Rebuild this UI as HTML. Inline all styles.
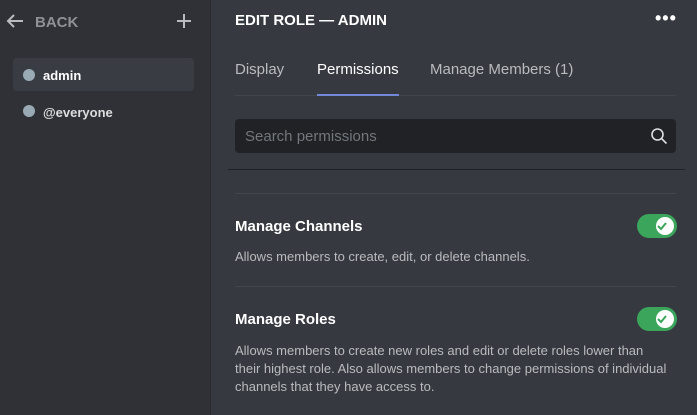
<!DOCTYPE html><html><head><style>
body{margin:0;width:697px;height:415px;overflow:hidden;background:#36393f;font-family:"Liberation Sans",sans-serif;position:relative}
.sb{position:absolute;left:0;top:0;width:210px;height:415px;background:#2f3136;border-right:1px solid #2a2c30}
.a{position:absolute}
.t{color:#fff;font-weight:bold}
.dot{position:absolute;width:12px;height:12px;border-radius:50%;background:#99aab5}
.hr{position:absolute;height:1px;background:#42454a}
.tog{position:absolute;left:637px;width:40px;height:24px;border-radius:12px;background:#3ba55c}
.tog i{position:absolute;right:3px;top:3px;width:18px;height:18px;border-radius:50%;background:#fff}
.desc{color:#b9bbbe;font-size:13px;line-height:18px}
</style></head><body>
<div class="sb">
<svg class="a" style="left:6px;top:13px" width="18" height="16" viewBox="0 0 18 16"><path d="M17 8H2M8 2L2 8l6 6" stroke="#b9bbbe" stroke-width="2" fill="none"/></svg>
<div class="a" style="left:35px;top:14px;color:#8e9297;font-weight:bold;font-size:15px">BACK</div>
<svg class="a" style="left:176px;top:13px" width="16" height="16"><path d="M8 1v14M1 8h14" stroke="#b9bbbe" stroke-width="2"/></svg>
<div class="a" style="left:13px;top:58px;width:181px;height:33px;background:#393c43;border-radius:4px"></div>
<div class="dot" style="left:23px;top:69px"></div>
<div class="a t" style="left:43px;top:68px;font-size:13px">admin</div>
<div class="dot" style="left:23px;top:105px"></div>
<div class="a t" style="left:43px;top:105px;font-size:13px;color:#dcddde">@everyone</div>
</div>
<div class="a t" style="left:235px;top:12px;font-size:15px">EDIT ROLE — ADMIN</div>
<div class="a" style="left:655px;top:8px;color:#fff;font-size:18px;letter-spacing:1px;font-weight:bold">•••</div>
<div class="a" style="left:235px;top:61px;color:#b9bbbe;font-size:15px">Display</div>
<div class="a" style="left:317px;top:61px;color:#fff;font-size:15px">Permissions</div>
<div class="a" style="left:430px;top:61px;color:#b9bbbe;font-size:15px">Manage Members (1)</div>
<div class="hr" style="left:235px;top:95px;width:441px;background:#42454a"></div>
<div class="a" style="left:317px;top:94px;width:82px;height:2px;background:#7289da"></div>
<div class="a" style="left:235px;top:119px;width:441px;height:34px;background:#202225;border-radius:4px"></div>
<div class="a" style="left:245px;top:128px;color:#72767d;font-size:15px">Search permissions</div>
<svg class="a" style="left:650px;top:127px" width="18" height="18"><circle cx="7.5" cy="7.5" r="5.5" stroke="#dcddde" stroke-width="1.6" fill="none"/><path d="M11.5 11.5l5 5" stroke="#dcddde" stroke-width="1.6"/></svg>
<div class="hr" style="left:228px;top:169px;width:457px;background:#202225"></div>
<div class="hr" style="left:235px;top:193px;width:441px"></div>
<div class="a t" style="left:235px;top:218px;font-size:15px;color:#fff">Manage Channels</div>
<div class="tog" style="top:214px"><i></i></div>
<div class="a desc" style="left:235px;top:248px">Allows members to create, edit, or delete channels.</div>
<div class="hr" style="left:235px;top:286px;width:441px"></div>
<div class="a t" style="left:235px;top:311px;font-size:15px;color:#fff">Manage Roles</div>
<div class="tog" style="top:307px"><i></i></div>
<div class="a desc" style="left:235px;top:342px;white-space:nowrap">Allows members to create new roles and edit or delete roles lower than<br>their highest role. Also allows members to change permissions of individual<br>channels that they have access to.</div>
<svg class="a" style="left:655px;top:219px" width="14" height="14"><path d="M3 7l3 3 5-6" stroke="#3ba55c" stroke-width="2" fill="none"/></svg>
<svg class="a" style="left:655px;top:312px" width="14" height="14"><path d="M3 7l3 3 5-6" stroke="#3ba55c" stroke-width="2" fill="none"/></svg>
</body></html>
